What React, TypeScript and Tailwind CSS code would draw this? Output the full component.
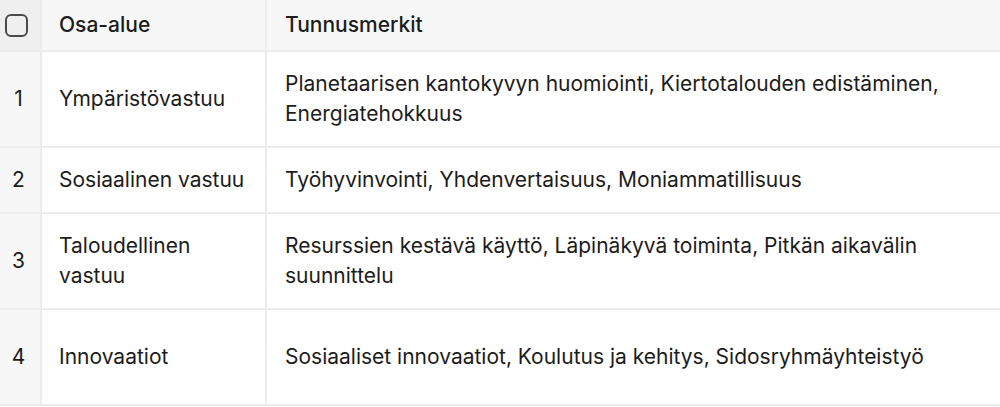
const rows = [
  { n: '1', area: 'Ympäristövastuu', traits: 'Planetaarisen kantokyvyn huomiointi, Kiertotalouden edistäminen, Energiatehokkuus', h: 'h-[96px]' },
  { n: '2', area: 'Sosiaalinen vastuu', traits: 'Työhyvinvointi, Yhdenvertaisuus, Moniammatillisuus', h: 'h-[66px]' },
  { n: '3', area: 'Taloudellinen vastuu', traits: 'Resurssien kestävä käyttö, Läpinäkyvä toiminta, Pitkän aikavälin suunnittelu', h: 'h-[96px]' },
  { n: '4', area: 'Innovaatiot', traits: 'Sosiaaliset innovaatiot, Koulutus ja kehitys, Sidosryhmäyhteistyö', h: 'h-[96px]' },
]

export default function App() {
  return (
    <div className="w-[1000px] h-[407px] bg-white overflow-hidden text-[#1c1c1c]" style={{ fontFamily: 'Inter, "Noto Sans", sans-serif' }}>
      <table className="w-[1000px] border-collapse table-fixed text-[21px] leading-[30px]">
        <colgroup>
          <col className="w-[41px]" />
          <col className="w-[225px]" />
          <col />
        </colgroup>
        <thead>
          <tr className="h-[51px] bg-[#f7f7f7]">
            <th className="border-r-2 border-b-2 border-[#ececec] p-0 pl-[5px] bg-[#efefef]">
              <div className="flex justify-start">
                <span className="block w-[23px] h-[23px] rounded-[6px] border-2 border-[#4a4a4a]" />
              </div>
            </th>
            <th className="border-r-2 border-b-2 border-[#ececec] px-[17px] text-left font-medium">Osa-alue</th>
            <th className="border-b-2 border-[#ececec] px-[18px] text-left font-medium">Tunnusmerkit</th>
          </tr>
        </thead>
        <tbody>
          {rows.map((r) => (
            <tr key={r.n} className={r.h}>
              <td className="border-r-2 border-b-2 border-[#ececec] bg-[#f7f7f7] p-0 pr-[3px] text-center">{r.n}</td>
              <td className="border-r-2 border-b-2 border-[#ececec] px-[17px] align-middle">{r.area}</td>
              <td className="border-b-2 border-[#ececec] pl-[18px] pr-[20px] align-middle">{r.traits}</td>
            </tr>
          ))}
        </tbody>
      </table>
    </div>
  )
}
